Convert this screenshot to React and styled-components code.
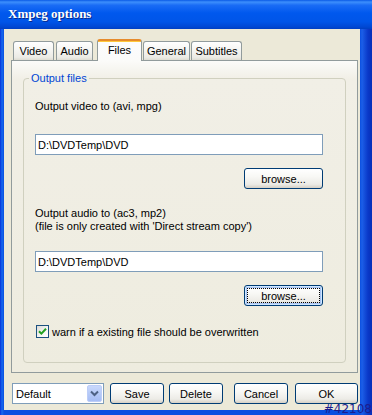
import styled, { createGlobalStyle } from "styled-components";

const GlobalStyle = createGlobalStyle`
  html, body {
    margin: 0;
    padding: 0;
    background: #ffffff;
  }
  body {
    font-family: "Liberation Sans", Arial, sans-serif;
    font-size: 11px;
    color: #000000;
  }
`;

const Window = styled.div`
  position: relative;
  width: 372px;
  height: 415px;
  display: flex;
  flex-direction: column;
  background: linear-gradient(to right, #0831d9 0, #166aee 2px, #0a4fe0 4px, #0a4fe0 360px, #1c5fe8 362px, #0a38c8 368px, #072fb8 372px);
  overflow: hidden;
`;

const TitleBar = styled.div`
  flex: none;
  height: 29px;
  display: flex;
  align-items: center;
  padding-left: 8px;
  padding-bottom: 1px;
  box-sizing: border-box;
  background: linear-gradient(
    to bottom,
    #0a5ae6 0%,
    #3d8ffc 7%,
    #1a6cf5 18%,
    #0058ee 45%,
    #0055e8 75%,
    #0048d4 92%,
    #003fc2 100%
  );
  color: #ffffff;
  font-family: "Liberation Serif", "Times New Roman", serif;
  font-weight: bold;
  font-size: 13px;
  text-shadow: 1px 1px 0 #0a2a8c;
`;

const Body = styled.div`
  flex: 1;
  margin: 0 12px 5px 4px;
  padding: 10px 2px 6px 7px;
  background: #ece9d8;
  display: flex;
  flex-direction: column;
`;

const TabRow = styled.div`
  display: flex;
  align-items: flex-end;
  height: 22px;
  margin-bottom: -1px;
  position: relative;
  z-index: 1;
`;

const Tab = styled.div`
  box-sizing: border-box;
  width: ${(p) => p.$w}px;
  margin-left: ${(p) => p.$ml}px;
  height: ${(p) => (p.$active ? 22 : 19)}px;
  margin-bottom: ${(p) => (p.$active ? 0 : 1)}px;
  display: flex;
  align-items: center;
  justify-content: center;
  padding-bottom: ${(p) => (p.$active ? 3 : 0)}px;
  border: 1px solid #919b9c;
  border-bottom: none;
  border-top: ${(p) => (p.$active ? "2px solid #e68b2c" : "1px solid #919b9c")};
  border-radius: 3px 3px 0 0;
  background: ${(p) =>
    p.$active
      ? "linear-gradient(to bottom, #ffc83c 0, #ffc83c 1px, #fcfcfe 1px, #fbfbf9 100%)"
      : "linear-gradient(to bottom, #ffffff 0%, #f6f6f3 40%, #ecebe5 85%, #dedcd2 100%)"};
`;

const Panel = styled.div`
  border: 1px solid #919b9c;
  background: linear-gradient(to bottom, #fbfbf9 0, #f1efe6 18px, #eeecdf 100%);
  padding: 11px 11px 9px 11px;
  display: flex;
  flex-direction: column;
`;

const GroupBox = styled.fieldset`
  margin: 0;
  border: 1px solid #d0d0bf;
  border-radius: 4px;
  padding: 15px 22px 24px 11px;
  min-width: 0;
`;

const Legend = styled.legend`
  padding: 0 2px;
  margin-left: -6px;
  line-height: 13px;
  color: #0046d5;
`;

const GroupBody = styled.div`
  display: flex;
  flex-direction: column;
`;

const Label = styled.div`
  line-height: 13px;
  margin-top: ${(p) => p.$mt || 0}px;
`;

const TextField = styled.div`
  box-sizing: border-box;
  height: 21px;
  margin-top: ${(p) => p.$mt}px;
  border: 1px solid #7f9db9;
  background: #ffffff;
  padding-left: 2px;
  display: flex;
  align-items: center;
`;

const Button = styled.div`
  box-sizing: border-box;
  width: ${(p) => p.$w}px;
  height: 21px;
  margin-top: ${(p) => p.$mt || 0}px;
  margin-left: ${(p) => p.$ml || 0}px;
  align-self: ${(p) => (p.$end ? "flex-end" : "auto")};
  flex: none;
  display: flex;
  align-items: center;
  justify-content: center;
  border: 1px solid #003c74;
  border-radius: 3px;
  background: linear-gradient(to bottom, #ffffff 0%, #f8f8f5 40%, #ecebe6 80%, #d6d0c5 100%);
  box-shadow: ${(p) => (p.$focused ? "inset 0 0 0 1px #cee7ff, inset 0 0 0 2px #a8c4f4" : "none")};
  outline: ${(p) => (p.$focused ? "1px dotted #000000" : "none")};
  outline-offset: -4px;
`;

const CheckRow = styled.div`
  display: flex;
  align-items: center;
  margin-top: 19px;
  height: 13px;
`;

const CheckBox = styled.div`
  box-sizing: border-box;
  width: 13px;
  height: 13px;
  margin-left: 1px;
  margin-right: 3px;
  border: 1px solid #1c5180;
  background: linear-gradient(135deg, #dcdcd7 0%, #f6f6f4 60%, #ffffff 100%);
  display: flex;
  align-items: center;
  justify-content: center;
`;

const Footer = styled.div`
  display: flex;
  margin-top: 10px;
  margin-left: 1px;
  height: 21px;
`;

const Combo = styled.div`
  box-sizing: border-box;
  width: 95px;
  height: 21px;
  border: 1px solid #7f9db9;
  background: #ffffff;
  display: flex;
  align-items: center;
  justify-content: space-between;
  padding: 1px 1px 1px 3px;
`;

const ComboArrow = styled.div`
  box-sizing: border-box;
  width: 15px;
  height: 17px;
  border: 1px solid #bccdf8;
  border-radius: 2px;
  background: linear-gradient(to bottom, #c9d8fc 0%, #b6caf8 50%, #a6bdf5 100%);
  display: flex;
  align-items: center;
  justify-content: center;
`;

const Watermark = styled.div`
  position: absolute;
  right: 0;
  top: 403px;
  white-space: nowrap;
  font-family: "DejaVu Sans", sans-serif;
  font-size: 12px;
  line-height: 12px;
  color: #1c1c8e;
`;

const tabs = [
  { label: "Video", w: 41, ml: 2 },
  { label: "Audio", w: 37, ml: 2 },
  { label: "Files", w: 45, ml: 4, active: true },
  { label: "General", w: 47, ml: 1 },
  { label: "Subtitles", w: 51, ml: 1 },
];

const App = () => {
  return (
    <>
      <GlobalStyle />
      <Window>
        <TitleBar>Xmpeg options</TitleBar>
        <Body>
          <TabRow>
            {tabs.map((t) => (
              <Tab key={t.label} $w={t.w} $ml={t.ml} $active={t.active}>
                {t.label}
              </Tab>
            ))}
          </TabRow>
          <Panel>
            <GroupBox>
              <Legend>Output files</Legend>
              <GroupBody>
                <Label>Output video to (avi, mpg)</Label>
                <TextField $mt={21}>D:\DVDTemp\DVD</TextField>
                <Button $w={79} $mt={13} $end>
                  browse...
                </Button>
                <Label $mt={18}>
                  Output audio to (ac3, mp2)
                  <br />
                  (file is only created with 'Direct stream copy')
                </Label>
                <TextField $mt={18}>D:\DVDTemp\DVD</TextField>
                <Button $w={79} $mt={13} $end $focused>
                  browse...
                </Button>
                <CheckRow>
                  <CheckBox>
                    <svg width="9" height="9" viewBox="0 0 9 9">
                      <path d="M1 4.2 L3.4 6.6 L8 1.8" fill="none" stroke="#21a121" strokeWidth="2" />
                    </svg>
                  </CheckBox>
                  warn if a existing file should be overwritten
                </CheckRow>
              </GroupBody>
            </GroupBox>
          </Panel>
          <Footer>
            <Combo>
              Default
              <ComboArrow>
                <svg width="9" height="7" viewBox="0 0 9 7">
                  <path d="M1 1.5 L4.5 5 L8 1.5" fill="none" stroke="#4d6185" strokeWidth="2" />
                </svg>
              </ComboArrow>
            </Combo>
            <Button $w={54} $ml={6}>Save</Button>
            <Button $w={54} $ml={5}>Delete</Button>
            <Button $w={54} $ml={11}>Cancel</Button>
            <Button $w={63} $ml={7}>OK</Button>
          </Footer>
        </Body>
        <Watermark>#42108</Watermark>
      </Window>
    </>
  );
};

export default App;
